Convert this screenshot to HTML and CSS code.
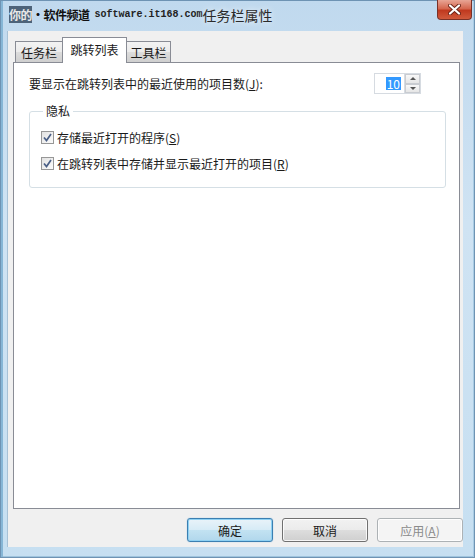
FILE: index.html
```html
<!DOCTYPE html>
<html lang="zh-CN">
<head>
  <meta charset="UTF-8" />
  <title>任务栏属性</title>
  <link rel="stylesheet" href="styles.css">
</head>
<body>
  <div class="window">
    <div class="titlebar">
      <span class="wm"><span class="wm-sel">你的</span>·软件频道</span>
      <span class="wm-url">software.it168.com</span>
      <span class="title">任务栏属性</span>
      <div class="close">
        <svg width="13" height="11" viewBox="0 0 13 11">
          <path d="M2 1.5 L11 9.5 M11 1.5 L2 9.5" stroke="#6b2418" stroke-width="4" stroke-linecap="round"/>
          <path d="M2 1.5 L11 9.5 M11 1.5 L2 9.5" stroke="#fff" stroke-width="2.2" stroke-linecap="round"/>
        </svg>
      </div>
    </div>

    <div class="client">
      <div class="tabs">
        <div class="tab tab-1">任务栏</div>
        <div class="tab tab-2 active">跳转列表</div>
        <div class="tab tab-3">工具栏</div>
      </div>

      <div class="panel">
        <div class="count-row">
          <span>要显示在跳转列表中的最近使用的项目数(<u>J</u>):</span>
          <div class="spinner">
            <div class="spin-input"><span class="spin-val">10</span></div>
            <div class="spin-btns">
              <div class="spin-btn"><span class="tri-up"></span></div>
              <div class="spin-btn"><span class="tri-down"></span></div>
            </div>
          </div>
        </div>

        <fieldset class="group">
          <legend>隐私</legend>
          <div class="check-row">
            <span class="checkbox">
              <svg width="9" height="9" viewBox="0 0 9 9"><path d="M1 4.5 L3.5 7.5 L8 1" fill="none" stroke="#4a5f86" stroke-width="1.7"/></svg>
            </span>
            <span>存储最近打开的程序(<u>S</u>)</span>
          </div>
          <div class="check-row">
            <span class="checkbox">
              <svg width="9" height="9" viewBox="0 0 9 9"><path d="M1 4.5 L3.5 7.5 L8 1" fill="none" stroke="#4a5f86" stroke-width="1.7"/></svg>
            </span>
            <span>在跳转列表中存储并显示最近打开的项目(<u>R</u>)</span>
          </div>
        </fieldset>
      </div>

      <div class="buttons">
        <button class="btn default">确定</button>
        <button class="btn">取消</button>
        <button class="btn disabled">应用(<u>A</u>)</button>
      </div>
    </div>
  </div>
</body>
</html>
```

FILE: styles.css
```css
* {
  box-sizing: border-box;
}

body {
  margin: 0;
  font-family: "Noto Sans CJK SC", sans-serif;
  font-size: 12px;
  color: #1a1a1a;
}

.window {
  width: 475px;
  height: 558px;
  display: flex;
  flex-direction: column;
  padding: 0 12px 11px 7px;
  background: linear-gradient(180deg, #c0d9ee 0%, #cfe3f3 40%, #c6dff1 100%);
  box-shadow: inset 0 0 0 1px #6e93b3, inset 3px 0 0 #86b6d6, inset -2px 0 0 #a9cce4, inset 0 -2px 0 #9fc4dd;
}

/* title bar */
.titlebar {
  height: 31px;
  display: flex;
  align-items: flex-start;
  padding-left: 2px;
  margin-right: -9px;
}

.wm {
  margin-top: 6px;
  font-weight: bold;
  font-size: 12px;
  line-height: 18px;
  letter-spacing: -0.5px;
  color: #111;
}

.wm-sel {
  background: #4d6379;
  color: #e8e8e8;
}

.wm-url {
  margin-top: 6px;
  margin-left: 5px;
  font-family: "Liberation Mono", monospace;
  font-weight: bold;
  font-size: 10px;
  line-height: 18px;
  color: #222;
}

.title {
  margin-top: 5px;
  font-size: 14px;
  line-height: 20px;
  color: #2a2a2a;
  text-shadow: 0 0 6px rgba(255, 255, 255, 0.9);
}

.close {
  margin-left: auto;
  width: 35px;
  height: 20px;
  display: flex;
  align-items: center;
  justify-content: center;
  border: 1px solid #7a3127;
  border-top: none;
  border-radius: 0 0 4px 4px;
  background: linear-gradient(180deg, #e8a595 0%, #d5674f 45%, #c0391f 55%, #d05a3c 100%);
}

/* client area */
.client {
  flex: 1;
  display: flex;
  flex-direction: column;
  background: #f0f0f0;
  border-left: 1px solid #a7c1d6;
  padding: 6px 3px 0 5px;
}

.tabs {
  height: 26px;
  display: flex;
  align-items: flex-end;
  padding-left: 2px;
  margin-bottom: -1px;
  position: relative;
  z-index: 1;
}

.tab {
  height: 22px;
  display: flex;
  align-items: center;
  justify-content: center;
  border: 1px solid #898c95;
  background: linear-gradient(180deg, #f3f3f3 0%, #ebebeb 50%, #dddddd 51%, #cfcfcf 100%);
  color: #1a1a1a;
}

.tab-1 {
  width: 47px;
  border-right: none;
}

.tab-2 {
  width: 65px;
}

.tab-3 {
  width: 44px;
  border-left: none;
}

.tab.active {
  height: 26px;
  background: #fff;
  border-bottom: none;
  padding-bottom: 2px;
}

.panel {
  flex: 1;
  background: #fff;
  border: 1px solid #898c95;
  padding: 10px 13px 0 15px;
}

.count-row {
  height: 21px;
  display: flex;
  align-items: center;
  justify-content: space-between;
  padding-right: 25px;
}

.spinner {
  display: flex;
  height: 21px;
}

.spin-input {
  width: 30px;
  border: 1px solid #d6dbe1;
  border-right: none;
  display: flex;
  align-items: center;
  justify-content: flex-end;
  padding-right: 3px;
}

.spin-val {
  background: #3399ff;
  color: #fff;
  line-height: 13px;
  padding: 0 1px;
}

.spin-btns {
  width: 17px;
  display: flex;
  flex-direction: column;
  border: 1px solid #d6dbe1;
}

.spin-btn {
  flex: 1;
  display: flex;
  align-items: center;
  justify-content: center;
  border: 1px solid #c9ccd1;
  background: linear-gradient(180deg, #f8f8f8, #e6e6e6);
}

.tri-up {
  border-left: 3px solid transparent;
  border-right: 3px solid transparent;
  border-bottom: 3px solid #555;
}

.tri-down {
  border-left: 3px solid transparent;
  border-right: 3px solid transparent;
  border-top: 3px solid #555;
}

.group {
  margin: 10px 0 0 0;
  padding: 6px 10px 11px 11px;
  border: 1px solid #d5dfe5;
  border-radius: 3px;
  box-shadow: inset 1px 1px 0 #fff;
}

.group legend {
  padding: 0 3px;
  margin-left: 2px;
  line-height: 14px;
}

.check-row {
  height: 26px;
  display: flex;
  align-items: center;
}

.checkbox {
  width: 13px;
  height: 13px;
  margin-right: 3px;
  display: flex;
  align-items: center;
  justify-content: center;
  border: 1px solid #979797;
  background: linear-gradient(135deg, #e2e2e2, #fbfbfb);
}

/* bottom buttons */
.buttons {
  height: 38px;
  display: flex;
  justify-content: flex-end;
  gap: 9px;
  padding: 9px 0 0 0;
  margin-right: -3px;
}

.btn {
  width: 86px;
  height: 24px;
  font-family: "Noto Sans CJK SC", sans-serif;
  font-size: 12px;
  color: #1a1a1a;
  border: 1px solid #707070;
  border-radius: 3px;
  background: linear-gradient(180deg, #f2f2f2 0%, #ebebeb 50%, #dddddd 51%, #cfcfcf 100%);
  box-shadow: inset 0 0 0 1px rgba(255, 255, 255, 0.8);
  padding: 0;
}

.btn.default {
  border-color: #3c7fb1;
  background: linear-gradient(180deg, #e9f3f9 0%, #d6ebf6 50%, #c2e2f2 51%, #b1d7ec 100%);
  box-shadow: inset 0 0 0 1px #8ed1f3, 0 0 1px #6fb2e0;
}

.btn.disabled {
  color: #8b8b8b;
  border-color: #adb2b5;
  background: #f4f4f4;
}
```
